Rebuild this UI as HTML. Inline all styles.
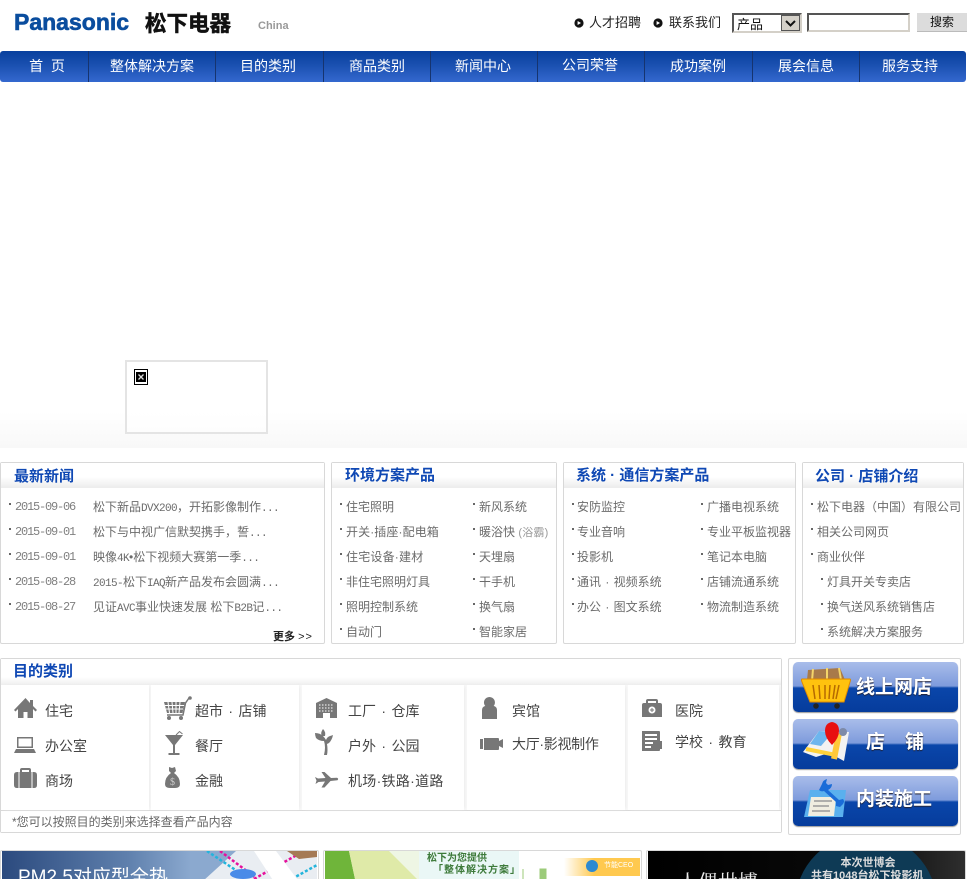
<!DOCTYPE html>
<html lang="zh-CN"><head><meta charset="utf-8"><title>Panasonic China</title>
<style>
html{margin:0;padding:0;background:#fff;width:967px;height:879px;overflow:hidden}
body{margin:0;padding:0;background:#fff;position:relative;width:967px;height:879px;overflow:hidden;font-family:"Liberation Sans","WenQuanYi Zen Hei","Noto Sans CJK SC",sans-serif;font-size:12px;color:#666}
.a,.t,.n,.h,.b{position:absolute}
.t{line-height:16px;height:16px;white-space:nowrap;font-size:12px;color:#6b6b6b}
.n{top:58px;line-height:16px;color:#fff;font-size:14px;white-space:nowrap;transform:translateX(-50%)}
.s{position:absolute;top:51px;width:1px;height:31px;background:#16346f}
.p{position:absolute;box-sizing:border-box;border:1px solid #d8d8d8;border-radius:2px;background:#fff}
.hd{position:absolute;left:0;right:0;top:0;height:25px;background:linear-gradient(#fff 0,#fff 55%,#ececec 100%)}
.h{font-size:15px;font-weight:bold;color:#0f48b4;line-height:18px;white-space:nowrap}
.b{width:2px;height:2px;background:#666}
.d{font-family:"Liberation Mono",monospace;font-size:12px;letter-spacing:-1.2px;color:#808080}
.l{font-family:"Liberation Mono",monospace;font-size:11px;letter-spacing:-.6px}
.c{position:absolute;top:685px;height:125px;background:#fff;box-shadow:2px 0 3px -1px #ececec}
.g{color:#444;font-size:14px;word-spacing:1.5px}
.bt{position:absolute;left:793px;width:165px;height:50px;border-radius:5px;background:linear-gradient(#a9bdea 0,#7e9bdc 48%,#0a46aa 52%,#063c9c 100%);box-shadow:0 1px 1px #999;overflow:hidden}
.bt span{position:absolute;color:#fff;font-weight:bold;font-size:19px;line-height:24px;white-space:nowrap;text-shadow:0 1px 1px #223}
#clip{position:absolute;left:0;top:850px;width:967px;height:29px;overflow:hidden}
#clip .p{height:29px;border-bottom:0;border-radius:2px 2px 0 0;overflow:hidden}
#clip .t{overflow:hidden}
</style></head><body>

<!-- logo -->
<div class="a" style="left:14px;top:9px;font:bold 23px/26px 'Liberation Sans',sans-serif;color:#0a4d9e;-webkit-text-stroke:.6px #0a4d9e">Panasonic</div>
<div class="a" style="left:145px;top:10px;font-size:21.5px;font-weight:bold;line-height:26px;color:#111;font-family:'Noto Sans CJK SC',sans-serif;white-space:nowrap;-webkit-text-stroke:.5px #111">松下电器</div>
<div class="a" style="left:258px;top:20px;font:bold 11px/13px 'Liberation Sans',sans-serif;color:#999">China</div>

<!-- top links -->
<svg class="a" style="left:574px;top:18px" width="10" height="10"><circle cx="5" cy="5" r="4.6" fill="#111"/><path d="M3.6 3l3.4 2-3.4 2z" fill="#fff"/></svg>
<div class="t" style="left:589px;top:15px;font-size:13px;color:#222">人才招聘</div>
<svg class="a" style="left:653px;top:18px" width="10" height="10"><circle cx="5" cy="5" r="4.6" fill="#111"/><path d="M3.6 3l3.4 2-3.4 2z" fill="#fff"/></svg>
<div class="t" style="left:669px;top:15px;font-size:13px;color:#222">联系我们</div>

<div class="a" style="left:732px;top:13px;width:70px;height:20px;box-sizing:border-box;border:2px solid;border-color:#555 #d4d0c8 #d4d0c8 #555;background:#fff">
  <div class="t" style="left:3px;top:2px;font-size:13px;color:#111">产品</div>
  <div class="a" style="right:0;top:0;width:19px;height:16px;box-sizing:border-box;border:1px solid #555;background:#d4d0c8"><svg width="17" height="14" style="display:block"><path d="M4 5l4.5 4.5L13 5" fill="none" stroke="#111" stroke-width="2"/></svg></div>
</div>
<input class="a" type="text" aria-label="search" style="left:807px;top:13px;width:103px;height:19px;box-sizing:border-box;border:2px solid;border-color:#555 #d4d0c8 #d4d0c8 #555;background:#fff;padding:0;margin:0">
<div class="a" style="left:917px;top:13px;width:50px;height:19px;background:#dcdcdc;border-bottom:1px solid #bbb;box-sizing:border-box;text-align:center;line-height:19px;font-size:12px;color:#111">搜索</div>

<!-- nav -->
<div class="a" style="left:0;top:51px;width:966px;height:31px;border-radius:3px;background:linear-gradient(#08409e 0,#1a50b0 45%,#3468cf 100%)"></div>
<div class="s" style="left:88px"></div><div class="s" style="left:215px"></div><div class="s" style="left:323px"></div><div class="s" style="left:430px"></div><div class="s" style="left:537px"></div><div class="s" style="left:644px"></div><div class="s" style="left:752px"></div><div class="s" style="left:859px"></div>
<div class="n" style="left:47px">首&nbsp;&nbsp;页</div>
<div class="n" style="left:152px">整体解决方案</div>
<div class="n" style="left:268px">目的类别</div>
<div class="n" style="left:377px">商品类别</div>
<div class="n" style="left:483px">新闻中心</div>
<div class="n" style="left:590px;top:57px">公司荣誉</div>
<div class="n" style="left:698px">成功案例</div>
<div class="n" style="left:806px">展会信息</div>
<div class="n" style="left:910px">服务支持</div>

<!-- hero -->
<div class="a" style="left:0;top:412px;width:967px;height:36px;background:linear-gradient(#fff,#f8f8f8)"></div>
<div class="a" style="left:125px;top:360px;width:143px;height:74px;box-sizing:border-box;border:2px solid #e4e4e4;background:linear-gradient(#fff 70%,#fdfdfd)"></div>
<svg class="a" style="left:134px;top:369px" width="14" height="16"><rect x=".5" y=".5" width="13" height="15" fill="#fff" stroke="#000"/><rect x="2" y="3" width="10" height="10" fill="#000"/><path d="M4.500 5.500l5 5m0-5l-5 5" stroke="#ddd" stroke-width="1.300"/></svg>

<!-- panels -->
<div class="p" style="left:0;top:462px;width:325px;height:182px"><div class="hd"></div></div>
<div class="p" style="left:331px;top:462px;width:226px;height:182px"><div class="hd"></div></div>
<div class="p" style="left:563px;top:462px;width:233px;height:182px"><div class="hd"></div></div>
<div class="p" style="left:802px;top:462px;width:162px;height:182px"><div class="hd"></div></div>
<div class="h" style="left:14px;top:468px">最新新闻</div>
<div class="h" style="left:345px;top:467px">环境方案产品</div>
<div class="h" style="left:576px;top:467px">系统 · 通信方案产品</div>
<div class="h" style="left:815px;top:468px">公司 · 店铺介绍</div>

<!-- news -->
<div class="b" style="left:9px;top:503px"></div><div class="t d" style="left:15px;top:499px">2015-09-06</div><div class="t" style="left:93px;top:499px">松下新品<span class="l">DVX200</span>，开拓影像制作<span class="l">...</span></div>
<div class="b" style="left:9px;top:528px"></div><div class="t d" style="left:15px;top:524px">2015-09-01</div><div class="t" style="left:93px;top:524px">松下与中视广信默契携手，誓<span class="l">...</span></div>
<div class="b" style="left:9px;top:553px"></div><div class="t d" style="left:15px;top:549px">2015-09-01</div><div class="t" style="left:93px;top:549px">映像<span class="l">4K</span>•松下视频大赛第一季<span class="l">...</span></div>
<div class="b" style="left:9px;top:578px"></div><div class="t d" style="left:15px;top:574px">2015-08-28</div><div class="t" style="left:93px;top:574px"><span class="l">2015-</span>松下<span class="l">IAQ</span>新产品发布会圆满<span class="l">...</span></div>
<div class="b" style="left:9px;top:603px"></div><div class="t d" style="left:15px;top:599px">2015-08-27</div><div class="t" style="left:93px;top:599px">见证<span class="l">AVC</span>事业快速发展 松下<span class="l">B2B</span>记<span class="l">...</span></div>
<div class="t" style="left:273px;top:629px;font-size:11px;font-weight:bold;color:#222">更多 <span style="font-weight:normal;letter-spacing:1px">&gt;&gt;</span></div>

<!-- col 2 -->
<div class="b" style="left:340px;top:503px"></div><div class="t" style="left:346px;top:499px">住宅照明</div>
<div class="b" style="left:340px;top:528px"></div><div class="t" style="left:346px;top:524px;letter-spacing:.1px">开关·插座·配电箱</div>
<div class="b" style="left:340px;top:553px"></div><div class="t" style="left:346px;top:549px;letter-spacing:.2px">住宅设备·建材</div>
<div class="b" style="left:340px;top:578px"></div><div class="t" style="left:346px;top:574px">非住宅照明灯具</div>
<div class="b" style="left:340px;top:603px"></div><div class="t" style="left:346px;top:599px">照明控制系统</div>
<div class="b" style="left:340px;top:628px"></div><div class="t" style="left:346px;top:624px">自动门</div>
<div class="b" style="left:473px;top:503px"></div><div class="t" style="left:479px;top:499px">新风系统</div>
<div class="b" style="left:473px;top:528px"></div><div class="t" style="left:479px;top:524px">暖浴快 <span style="font-size:11px;letter-spacing:.2px;color:#999">(浴霸)</span></div>
<div class="b" style="left:473px;top:553px"></div><div class="t" style="left:479px;top:549px">天埋扇</div>
<div class="b" style="left:473px;top:578px"></div><div class="t" style="left:479px;top:574px">干手机</div>
<div class="b" style="left:473px;top:603px"></div><div class="t" style="left:479px;top:599px">换气扇</div>
<div class="b" style="left:473px;top:628px"></div><div class="t" style="left:479px;top:624px">智能家居</div>

<!-- col 3 -->
<div class="b" style="left:572px;top:503px"></div><div class="t" style="left:577px;top:499px">安防监控</div>
<div class="b" style="left:572px;top:528px"></div><div class="t" style="left:577px;top:524px">专业音响</div>
<div class="b" style="left:572px;top:553px"></div><div class="t" style="left:577px;top:549px">投影机</div>
<div class="b" style="left:572px;top:578px"></div><div class="t" style="left:577px;top:574px;word-spacing:1px">通讯 · 视频系统</div>
<div class="b" style="left:572px;top:603px"></div><div class="t" style="left:577px;top:599px;word-spacing:1px">办公 · 图文系统</div>
<div class="b" style="left:701px;top:503px"></div><div class="t" style="left:707px;top:499px">广播电视系统</div>
<div class="b" style="left:701px;top:528px"></div><div class="t" style="left:707px;top:524px">专业平板监视器</div>
<div class="b" style="left:701px;top:553px"></div><div class="t" style="left:707px;top:549px">笔记本电脑</div>
<div class="b" style="left:701px;top:578px"></div><div class="t" style="left:707px;top:574px">店铺流通系统</div>
<div class="b" style="left:701px;top:603px"></div><div class="t" style="left:707px;top:599px">物流制造系统</div>

<!-- col 4 -->
<div class="b" style="left:811px;top:503px"></div><div class="t" style="left:817px;top:499px">松下电器（中国）有限公司</div>
<div class="b" style="left:811px;top:528px"></div><div class="t" style="left:817px;top:524px">相关公司网页</div>
<div class="b" style="left:811px;top:553px"></div><div class="t" style="left:817px;top:549px">商业伙伴</div>
<div class="b" style="left:821px;top:578px"></div><div class="t" style="left:827px;top:574px">灯具开关专卖店</div>
<div class="b" style="left:821px;top:603px"></div><div class="t" style="left:827px;top:599px">换气送风系统销售店</div>
<div class="b" style="left:821px;top:628px"></div><div class="t" style="left:827px;top:624px">系统解决方案服务</div>

<!-- purpose -->
<div class="p" style="left:0;top:658px;width:782px;height:175px;background:#f9f9f9">
  <div class="a" style="left:0;right:0;top:0;height:26px;background:linear-gradient(#fff 70%,#eee)"></div>
  <div class="a" style="left:0;right:0;top:151px;height:21px;background:#fff;border-top:1px solid #d8d8d8"></div>
</div>
<div class="c" style="left:1px;width:148px"></div>
<div class="c" style="left:151px;width:148px"></div>
<div class="c" style="left:302px;width:162px"></div>
<div class="c" style="left:467px;width:158px"></div>
<div class="c" style="left:628px;width:151px"></div>
<div class="h" style="left:13px;top:663px">目的类别</div>
<div class="t" style="left:12px;top:814px;color:#666">*您可以按照目的类别来选择查看产品内容</div>

<svg class="a" style="left:0;top:685px" width="782" height="125" fill="#777">
  <!-- house -->
  <path d="M25.500 13L14 25l1.500 1.500L18 24v9h5.500v-6h4v6H33v-9l2.500 2.500L37 25l-4-4v-6h-3v3z"/>
  <!-- laptop -->
  <path d="M17 52h16v11H17zm1.500 1.500v8h13v-8zM16 64h18l2 4H14z" fill-rule="evenodd"/>
  <!-- bag -->
  <path d="M14 90q0-3 3-3h3v-2q0-2 2-2h7q2 0 2 2v2h3q3 0 3 3v10q0 3-3 3H17q-3 0-3-3zM22 87h7v-2h-7z" fill-rule="evenodd"/>
  <path d="M19 87v16M32 87v16" stroke="#fff" stroke-width="1"/>
  <!-- cart -->
  <path d="M164 17h21l-2.500 11H167z" fill="#777"/>
  <path d="M168 17l1.500 11M172 17l1 11M176 17v11M180 17l-1 11M165 20.500h19M166 24h17" stroke="#fff" stroke-width="1" fill="none"/>
  <path d="M167 30h16l2.500-12 3.500-5" stroke="#777" stroke-width="1.500" fill="none"/>
  <circle cx="190" cy="13" r="1.800"/><circle cx="169" cy="33" r="2"/><circle cx="181" cy="33" r="2"/>
  <!-- cocktail -->
  <path d="M165 50h18l-8 10v8h4.500v2h-11v-2h4.500v-8z"/>
  <path d="M176 50l3.500-3.500 3 2.500" stroke="#777" fill="none"/>
  <!-- money bag -->
  <path d="M169 82l3 1 3-1 1 4-2 2q6 4 6 11 0 4-5 4h-5q-5 0-5-4 0-7 6-11l-2-2z"/>
  <text x="170" y="100" font-size="10" fill="#ccc" font-family="Liberation Serif,serif">$</text>
  <!-- factory -->
  <path d="M316 18l10.500-5 10.500 5v15h-7v-5h-7v5h-7z"/>
  <path d="M319 20h15M319 23h15M319 26h15" stroke="#fff" stroke-dasharray="1.500 1.500" fill="none"/>
  <!-- sprout -->
  <path d="M324 70q2-8 0-14-5 0-8-3-1-3-1-5 5 0 8 3 2 2 3 4 1-3 4-4 3-1 3-1-1 5-4 8l-2 1q1 6 0 11z"/>
  <path d="M322 51q-2-3 1-7 3 3 2 7z"/>
  <!-- plane -->
  <path d="M315 92l3 1.500 7.500-.5-4-6h3l6.500 6 6-.3q2 .8.500 2.500l-7 .8-6 6.500h-3l3.500-6-6.500.5-3 2 1-3.500z"/>
  <!-- person -->
  <path d="M489.500 12a5.500 5.500 0 1 1-.1 0zM482 34v-9q0-3 3-4l3.500-1 1 3 1-3 3.500 1q3 1 3 4v9z"/>
  <!-- camera -->
  <path d="M480 54h3v10h-3zM484 53h14q1 0 1 1v2l4-2v9l-4-2v3q0 1-1 1h-14z"/>
  <!-- medical -->
  <path d="M646 18v-2q0-2 2-2h8q2 0 2 2v2h2q2 0 2 2v12h-20V20q0-2 2-2zM648 18h8v-2h-8z" fill-rule="evenodd"/>
  <circle cx="652" cy="25" r="3.500" fill="#fff"/><path d="M650 25h4M652 23v4" stroke="#777"/>
  <!-- school -->
  <path d="M642 46h17q1 0 1 1v9h2v8h-2v1q0 1-1 1h-17zm3 3v2h12v-2zm0 4v2h12v-2zm0 4v2h8v-2zm0 4v2h6v-2z" fill-rule="evenodd"/>
</svg>

<div class="t g" style="left:45px;top:703px">住宅</div>
<div class="t g" style="left:45px;top:738px">办公室</div>
<div class="t g" style="left:45px;top:773px">商场</div>
<div class="t g" style="left:195px;top:703px">超市 · 店铺</div>
<div class="t g" style="left:195px;top:738px">餐厅</div>
<div class="t g" style="left:195px;top:773px">金融</div>
<div class="t g" style="left:348px;top:703px">工厂 · 仓库</div>
<div class="t g" style="left:348px;top:738px">户外 · 公园</div>
<div class="t g" style="left:348px;top:773px;letter-spacing:.3px">机场·铁路·道路</div>
<div class="t g" style="left:512px;top:703px">宾馆</div>
<div class="t g" style="left:512px;top:736px;letter-spacing:-.3px">大厅·影视制作</div>
<div class="t g" style="left:675px;top:703px">医院</div>
<div class="t g" style="left:675px;top:734px">学校 · 教育</div>

<!-- right buttons -->
<div class="p" style="left:788px;top:658px;width:173px;height:177px"></div>
<div class="bt" style="top:662px"><span style="left:63px;top:14px">线上网店</span>
  <svg class="a" style="left:8px;top:4px" width="52" height="46"><path d="M7 4l32-2 5 12H6z" fill="#a87a4a"/><path d="M12 3l-1 12M26 2v12M38 2l2 12" stroke="#f4d56a" stroke-width="2"/><path d="M1 13h48q1 0 0 3l-6 20H9L1 16q-1-3 0-3z" fill="#ffc20e" stroke="#e08a00"/><path d="M12 19l2 14m4-14l1 14m5-14v14m5-14l-1 14m6-14l-2 14m6-14l-3 14" stroke="#b56a00" stroke-width="1.500"/><circle cx="15" cy="40" r="2.800" fill="#222"/><circle cx="36" cy="40" r="2.800" fill="#222"/></svg>
</div>
<div class="bt" style="top:719px"><span style="left:73px;top:12px">店</span><span style="left:112px;top:12px">铺</span>
  <svg class="a" style="left:8px;top:0" width="50" height="50"><path d="M2 33L18 12l30 1-5 29-15-8-13 4z" fill="#f2f2f2"/><path d="M18 12l14 1-12 14-11-2z" fill="#6db5ee"/><path d="M5 30l30 6" stroke="#ffd23a" stroke-width="4"/><path d="M38 14l-5 26" stroke="#ffc93a" stroke-width="6"/><circle cx="42" cy="13" r="4" fill="#7d8aa8"/><path d="M31 26q-7-7-7-14 0-8 7-9 7 1 7 9 0 7-7 14z" fill="#e81010"/></svg>
</div>
<div class="bt" style="top:776px"><span style="left:63px;top:12px">内装施工</span>
  <svg class="a" style="left:9px;top:0" width="50" height="46"><path d="M8 14h36l-3 27H2z" fill="#5ab0ee"/><path d="M9 21h25l-2 19H6z" fill="#f0ede0"/><path d="M12 25h18M11 30h16M10 35h18" stroke="#999" stroke-width="1.500"/><path d="M20 8q1-4 5-5l-1 4 2 2 4-1q0 4-4 6l11 10 4-1q2 2 0 5l-3 3-4-1 0-4-12-11q-3 1-5-1z" fill="#1a6cd8"/></svg>
</div>

<!-- bottom banners (cut off at the viewport edge) -->
<div id="clip">
<div class="p" style="left:0;top:0;width:319px"><div class="a" style="left:1px;top:0;width:315px;height:28px;background:linear-gradient(90deg,#2b4a7e 0,#5f80ad 40%,#8ba9cf 60%)"></div>
<svg class="a" style="left:1px;top:0" width="315" height="28"><path d="M190 40l44-40h81v40z" fill="#e9edf2"/><path d="M218 0l36 27M252 28l50-28" stroke="#e6109c" stroke-width="2.500" stroke-dasharray="3 2" fill="none"/><path d="M205 0l36 24M268 40l47-26" stroke="#22b4dc" stroke-width="2.500" stroke-dasharray="3 2" fill="none"/><ellipse cx="241" cy="23" rx="13" ry="5" fill="#4a8be8"/><path d="M252 0h22l30 40h-26z" fill="#fff"/><path d="M285 0h30v6l-18 2z" fill="#a57a55"/></svg>
</div>
<div class="t" style="left:18px;top:15px;font-size:19px;line-height:26px;height:14px;color:#fff">PM2.5对应型全热</div>

<div class="p" style="left:323px;top:0;width:319px"><div class="a" style="left:1px;top:0;width:315px;height:28px;background:#fff"></div>
<svg class="a" style="left:1px;top:0" width="315" height="28"><defs><linearGradient id="o"><stop offset="0" stop-color="#fff"/><stop offset=".4" stop-color="#ffc94f"/></linearGradient></defs><rect x="0" y="0" width="95" height="28" fill="#eef6e4"/><path d="M0 0h24l6 28H0z" fill="#6fb53a"/><path d="M24 0h40l28 28H30z" fill="#dfeaa8"/><rect x="94" y="0" width="100" height="28" fill="#eaf7f6"/><rect x="239" y="7" width="76" height="18" fill="url(#o)"/><circle cx="267" cy="15" r="6" fill="#2e8ad0"/><path d="M198 18v10M215 18h6v10h-6z" fill="#9ccb7a" stroke="#9ccb7a"/></svg>
</div>
<div class="t" style="left:427px;top:1px;font-size:10px;font-weight:bold;color:#3d7a3a">松下为您提供</div>
<div class="t" style="left:433px;top:13px;font-size:10px;font-weight:bold;color:#3d7a3a;letter-spacing:1px">「整体解决方案」</div>
<div class="t" style="left:604px;top:8px;font-size:7px;color:#fff">节能CEO</div>

<div class="p" style="left:646px;top:0;width:320px"><div class="a" style="left:1px;top:0;width:317px;height:28px;background:linear-gradient(90deg,#000 0,#0a0a0a 70%,#2e2e2e 100%)"></div>
<svg class="a" style="left:1px;top:0" width="317" height="28"><circle cx="218" cy="54" r="71" fill="#0e3a55"/></svg>
</div>
<div class="t" style="left:868px;top:5px;font-size:11px;font-weight:bold;color:#ddd;transform:translateX(-50%)">本次世博会</div>
<div class="t" style="left:811px;top:18px;height:11px;font-size:11px;font-weight:bold;color:#ddd">共有1048台松下投影机</div>
<div class="t" style="left:678px;top:19px;font-size:20px;line-height:24px;height:10px;color:#eee;font-family:'Noto Serif CJK SC',serif">人偶世博</div>
</div>

</body></html>
